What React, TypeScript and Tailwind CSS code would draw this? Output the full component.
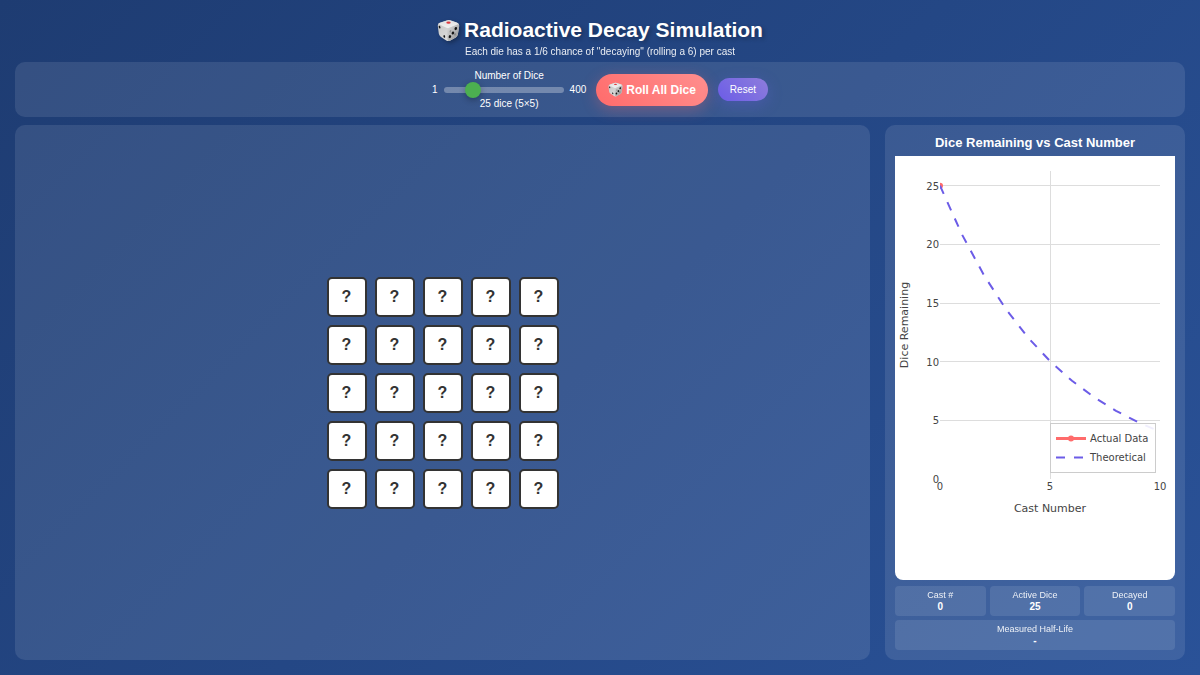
import React, { useState } from "react";

type Die = { value: number | null; decayed: boolean };

const makeDice = (side: number): Die[] =>
  Array.from({ length: side * side }, () => ({ value: null, decayed: false }));

const DiceIcon: React.FC<{ className?: string }> = ({ className }) => (
  <svg viewBox="0 0 24 24" className={className} aria-hidden="true">
    <defs>
      <linearGradient id="dieTop" x1="0" y1="0" x2="0" y2="1">
        <stop offset="0" stopColor="#e2e2e2" />
        <stop offset="1" stopColor="#f0f0f0" />
      </linearGradient>
      <linearGradient id="dieLeft" x1="0" y1="0" x2="1" y2="1">
        <stop offset="0" stopColor="#c4c4c4" />
        <stop offset="1" stopColor="#e6e6e6" />
      </linearGradient>
      <linearGradient id="dieRight" x1="0" y1="0" x2="1" y2="1">
        <stop offset="0" stopColor="#dedede" />
        <stop offset="1" stopColor="#8f8f8f" />
      </linearGradient>
    </defs>
    <path
      d="M10 1.6Q12 .8 14 1.4L20.8 3.6Q23.4 4.6 23.2 7L21.800 16Q21.400 18.200 19.600 19.200L13.400 22.600Q11.400 23.600 9.600 22.400L3.800 18.400Q2.200 17.200 1.900 15.400L.8 7Q.6 4.800 2.800 4Z"
      fill="url(#dieLeft)"
    />
    <path d="M1.500 5.200Q2 4.300 3.400 3.800L10.500 1.600Q12 1.100 13.800 1.600L20.600 3.800Q22.600 4.600 22 5.600L13 9.200Q11.400 9.800 9.800 9.200Z" fill="url(#dieTop)" />
    <path d="M13 9.200L22 5.500Q23.400 6 23.100 7.400L21.800 16Q21.400 18.200 19.600 19.200L13.400 22.600Q11 23.600 11 21.500L10.600 11Q10.800 9.800 13 9.200Z" fill="url(#dieRight)" />
    <ellipse cx="12" cy="3.800" rx="2.300" ry="1.100" fill="#e0393e" />
    <g fill="#151515">
      <ellipse cx="2.700" cy="8.500" rx="0.900" ry="1.400" transform="rotate(-18 2.700 8.500)" />
      <ellipse cx="7.600" cy="18.200" rx="0.900" ry="1.400" transform="rotate(-18 7.600 18.200)" />
      <ellipse cx="13.500" cy="18.400" rx="1.300" ry="1.600" transform="rotate(22 13.500 18.400)" />
      <ellipse cx="16.600" cy="14.600" rx="1.300" ry="1.600" transform="rotate(22 16.600 14.600)" />
      <ellipse cx="19.600" cy="10" rx="1.300" ry="1.700" transform="rotate(22 19.600 10)" />
      <ellipse cx="14" cy="12.800" rx="0.900" ry="1.300" transform="rotate(22 14 12.800)" opacity="0.250" />
      <ellipse cx="18.800" cy="16" rx="0.900" ry="1.300" transform="rotate(22 18.800 16)" opacity="0.250" />
    </g>
  </svg>
);

const DecayChart: React.FC<{ history: number[] }> = ({ history }) => {
  const total = history[0];
  const maxCast = Math.max(10, history.length - 1);
  const left = 45;
  const top = 15;
  const width = 220;
  const height = 308;
  const x = (cast: number) => left + (cast / maxCast) * width;
  const y = (n: number) => top + height - (n / (total * 1.05)) * height;

  const yStep = Math.max(1, Math.round(total / 5));
  const yTicks = [];
  for (let n = 0; n <= total; n += yStep) yTicks.push(n);
  const xTicks = [];
  for (let c = 0; c <= maxCast; c += 5) xTicks.push(c);

  const theory = Array.from(
    { length: maxCast + 1 },
    (_, c) => `${x(c)},${y(total * Math.pow(5 / 6, c))}`
  ).join(" ");
  const actual = history.map((n, c) => `${x(c)},${y(n)}`).join(" ");

  return (
    <svg
      viewBox="0 0 280 424"
      preserveAspectRatio="xMidYMin meet"
      className="h-full w-full font-['DejaVu_Sans',sans-serif]"
      fill="#444"
      role="img"
      aria-label="Dice Remaining vs Cast Number"
    >
      <clipPath id="plotArea">
        <rect x={left} y={top} width={width} height={height} />
      </clipPath>
      <g fill="#ddd">
        {yTicks.slice(1).map((n) => (
          <rect key={n} x={left} y={Math.floor(y(n))} width={width} height="1" />
        ))}
        {xTicks.slice(1).map(
          (c) =>
            c < maxCast && <rect key={c} x={Math.floor(x(c))} y={top} width="1" height={height} />
        )}
      </g>
      <g clipPath="url(#plotArea)">
        <polyline points={actual} fill="none" stroke="#ff6b6b" strokeWidth="3" />
        {history.map((n, c) => (
          <circle key={c} cx={x(c)} cy={y(n)} r="3" fill="#ff6b6b" />
        ))}
        <polyline points={theory} fill="none" stroke="#6c5ce7" strokeWidth="2" strokeDasharray="9 9" />
      </g>
      <g fontSize="10">
        {yTicks.map((n) => (
          <text key={n} x={left - 1} y={y(n) + 4} textAnchor="end">
            {n}
          </text>
        ))}
        {xTicks.map((c) => (
          <text key={c} x={x(c)} y={top + height + 11} textAnchor="middle">
            {c}
          </text>
        ))}
      </g>
      <g fontSize="11" textAnchor="middle">
        <text x="155" y="356">Cast Number</text>
        <text transform="translate(13 169) rotate(-90)">Dice Remaining</text>
      </g>
      <rect x="155.5" y="267.5" width="105" height="49" fill="#fff" fillOpacity="0.9" stroke="#ccc" />
      <path d="M161 282.5H191" stroke="#ff6b6b" strokeWidth="3" />
      <circle cx="176" cy="282.5" r="3" fill="#ff6b6b" />
      <path d="M161 301.5H191" stroke="#6c5ce7" strokeWidth="2" strokeDasharray="9 9" />
      <g fontSize="10">
        <text x="195" y="286">Actual Data</text>
        <text x="195" y="305">Theoretical</text>
      </g>
    </svg>
  );
};

const Stat: React.FC<{ label: string; value: string | number; className?: string }> = ({
  label,
  value,
  className = "",
}) => (
  <div className={`rounded bg-white/10 py-[3px] text-center ${className}`}>
    <div className="text-[9px] leading-3 opacity-90">{label}</div>
    <div className="text-[10px] leading-3 font-bold">{value}</div>
  </div>
);

const App: React.FC = () => {
  const [side, setSide] = useState(5);
  const [dice, setDice] = useState<Die[]>(makeDice(5));
  const [history, setHistory] = useState<number[]>([25]);

  const reset = (n: number) => {
    setSide(n);
    setDice(makeDice(n));
    setHistory([n * n]);
  };

  const roll = () => {
    const next = dice.map((die) => {
      if (die.decayed) return die;
      const value = Math.floor(Math.random() * 6) + 1;
      return { value, decayed: value === 6 };
    });
    setDice(next);
    setHistory([...history, next.filter((die) => !die.decayed).length]);
  };

  const active = history[history.length - 1];
  const halfCast = history.findIndex((n) => n <= history[0] / 2);

  return (
    <div className="flex min-h-screen flex-col bg-linear-135 from-[#1e3c72] to-[#2a5298] p-[15px] font-['Liberation_Sans',Arial,sans-serif] text-white">
      <header className="pb-1 text-center">
        <h1 className="flex items-center justify-center gap-1 text-[21px] leading-[30px] font-bold text-shadow-[2px_2px_4px_rgb(0_0_0/0.3)]">
          <DiceIcon className="size-[23px] drop-shadow-[2px_2px_2px_rgb(0_0_0/0.3)]" />
          Radioactive Decay Simulation
        </h1>
        <p className="text-[10px] leading-[13px] opacity-90">
          Each die has a 1/6 chance of "decaying" (rolling a 6) per cast
        </p>
      </header>

      <div className="flex items-center justify-center gap-[10px] rounded-[10px] bg-white/10 py-[7px] text-[10px]">
        <div className="flex flex-col items-center">
          <label htmlFor="side" className="leading-[14px]">Number of Dice</label>
          <div className="flex items-center gap-[6px] leading-[14px]">
            <span>1</span>
            <input
              id="side"
              type="range"
              min={1}
              max={20}
              value={side}
              onChange={(e) => reset(Number(e.target.value))}
              className="h-[6px] w-[120px] cursor-pointer appearance-none rounded-full bg-white/30 outline-none [&::-webkit-slider-thumb]:size-4 [&::-webkit-slider-thumb]:appearance-none [&::-webkit-slider-thumb]:rounded-full [&::-webkit-slider-thumb]:bg-[#4caf50] [&::-webkit-slider-thumb]:shadow-[0_2px_6px_rgb(0_0_0/0.3)]"
            />
            <span>400</span>
          </div>
          <div className="leading-[13px]">
            {side * side} dice ({side}×{side})
          </div>
        </div>
        <button
          type="button"
          onClick={roll}
          className="flex h-8 cursor-pointer items-center gap-[3px] rounded-full bg-linear-45 from-[#ff6b6b] to-[#ff8e8e] px-3 text-xs font-bold shadow-[0_4px_15px_rgb(255_107_107/0.3)]"
        >
          <DiceIcon className="size-[15px]" />
          Roll All Dice
        </button>
        <button
          type="button"
          onClick={() => reset(side)}
          className="cursor-pointer rounded-full bg-linear-45 from-[#6c5ce7] to-[#8e7cdb] px-3 py-1 leading-[15px] shadow-[0_4px_15px_rgb(108_92_231/0.3)]"
        >
          Reset
        </button>
      </div>

      <main className="mt-2 flex flex-1 gap-[15px]">
        <section className="flex flex-1 items-center justify-center rounded-[10px] bg-white/10">
          <div
            className="grid gap-2"
            style={{ gridTemplateColumns: `repeat(${side}, auto)` }}
          >
            {dice.map((die, index) => (
              <div
                key={index}
                className={`flex size-10 items-center justify-center rounded-[5px] border-2 border-[#333] text-base font-bold text-[#333] ${
                  die.decayed ? "bg-[#ff6b6b] opacity-30" : "bg-white"
                }`}
              >
                {die.value ?? "?"}
              </div>
            ))}
          </div>
        </section>

        <section className="flex w-[300px] shrink-0 flex-col rounded-[10px] bg-white/10 p-[10px]">
          <h2 className="pb-[6px] text-center text-[13px] leading-[15px] font-bold">
            Dice Remaining vs Cast Number
          </h2>
          <div className="min-h-0 flex-1 overflow-hidden rounded-b-lg bg-white">
            <DecayChart history={history} />
          </div>
          <div className="mt-[6px] grid grid-cols-3 gap-1">
            <Stat label="Cast #" value={history.length - 1} />
            <Stat label="Active Dice" value={active} />
            <Stat label="Decayed" value={history[0] - active} />
            <Stat
              label="Measured Half-Life"
              value={halfCast > 0 ? `${halfCast} casts` : "-"}
              className="col-span-3"
            />
          </div>
        </section>
      </main>
    </div>
  );
};

export default App;
